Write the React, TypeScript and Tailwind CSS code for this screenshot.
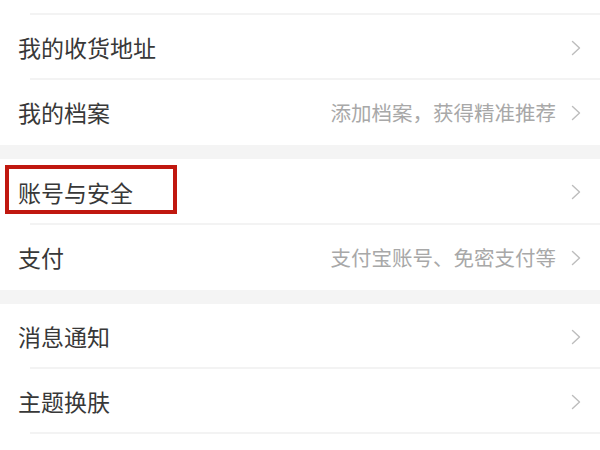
type Row = {
  title: string,
  hint?: string,
  divider: boolean,
  tall?: boolean,
  marked?: boolean,
}

const groups: Row[][] = [
  [
    { title: '我的收货地址', divider: true },
    { title: '我的档案', hint: '添加档案，获得精准推荐', divider: false },
  ],
  [
    { title: '账号与安全', divider: true, tall: true, marked: true },
    { title: '支付', hint: '支付宝账号、免密支付等', divider: false },
  ],
  [
    { title: '消息通知', divider: true },
    { title: '主题换肤', divider: true },
  ],
];

const Chevron = () => (
  <svg width="10" height="16" viewBox="0 0 10 16" fill="none" className="shrink-0">
    <polyline points="1.5,1.5 8.5,8 1.5,14.5" stroke="#bdbdbd" strokeWidth="1.4" strokeLinecap="round" strokeLinejoin="round" />
  </svg>
);

const SettingRow = ({ row }: { row: Row }) => (
  <div className={`relative flex items-center pl-[18px] pr-[19px] ${row.tall ? 'h-[66px]' : 'h-[65px]'}`}>
    <span className="text-[23px] text-[#383838] leading-none">{row.title}</span>
    <div className="ml-auto flex items-center">
      {row.hint ? (
        <span className="text-[20.5px] text-[#a8a8a8] leading-none mr-[15px]">{row.hint}</span>
      ) : null}
      <Chevron />
    </div>
    {row.divider ? (
      <div className="absolute bottom-0 left-[30px] right-0 h-[2px] bg-[#f3f3f3]" />
    ) : null}
    {row.marked ? (
      <div className="absolute left-[5px] top-[6px] w-[172px] h-[49px] border-[4px] border-[#c0180f]" />
    ) : null}
  </div>
);

export default function App() {
  return (
    <div
      className="w-[600px] h-[450px] overflow-hidden bg-white"
      style={{ fontFamily: '"Noto Sans CJK SC", "Noto Sans", sans-serif' }}
    >
      <div className="relative h-[15px]">
        <div className="absolute bottom-0 left-[30px] right-0 h-[2px] bg-[#f3f3f3]" />
      </div>
      {groups.map((group, i) => (
        <div key={i}>
          {i > 0 ? <div className="h-[14px] bg-[#f4f4f4]" /> : null}
          {group.map((row) => (
            <SettingRow key={row.title} row={row} />
          ))}
        </div>
      ))}
    </div>
  );
}
